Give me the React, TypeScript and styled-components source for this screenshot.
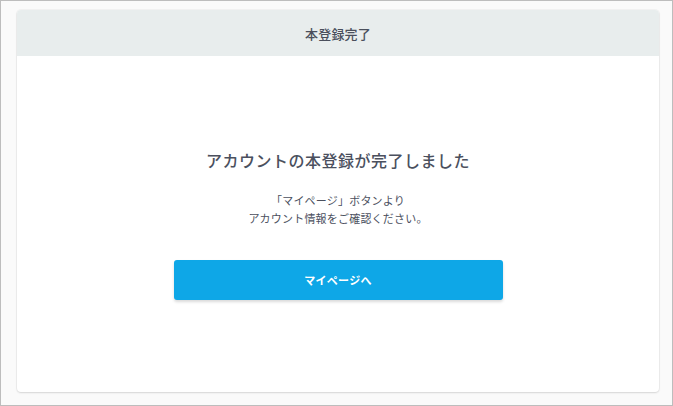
import React from "react";
import styled, { createGlobalStyle } from "styled-components";

const Global = createGlobalStyle`
  html, body { margin: 0; padding: 0; }
  body {
    font-family: "Noto Sans CJK JP", "Noto Sans", sans-serif;
    background: #fafafa;
  }
  * { box-sizing: border-box; }
`;

const Frame = styled.div`
  width: 673px;
  height: 406px;
  border: 1px solid #bdbdbd;
  background: #fafafa;
  padding: 9px 13px 13px 16px;
  display: flex;
`;

const Card = styled.div`
  flex: 1;
  display: flex;
  flex-direction: column;
  background: #ffffff;
  border-radius: 4px;
  box-shadow: 0 1px 2px rgba(0, 0, 0, 0.12), 0 0 0 1px rgba(0, 0, 0, 0.03);
  overflow: hidden;
`;

const Header = styled.div`
  height: 46px;
  flex: none;
  background: #e8eded;
  display: flex;
  align-items: center;
  justify-content: center;
  font-size: 13px;
  font-weight: 500;
  color: #4a4f5c;
  letter-spacing: 0.2px;
`;

const Body = styled.div`
  flex: 1;
  display: flex;
  flex-direction: column;
  align-items: center;
  padding-top: 92px;
`;

const Title = styled.h1`
  margin: 0;
  font-size: 16px;
  font-weight: 500;
  color: #4b505e;
  line-height: 24px;
  letter-spacing: 0.5px;
`;

const Message = styled.p`
  margin: 19px 0 0;
  font-size: 11px;
  line-height: 18px;
  color: #4b505e;
  text-align: center;
  letter-spacing: 0.2px;
`;

const Button = styled.button`
  margin-top: 33px;
  width: 329px;
  height: 40px;
  border: none;
  border-radius: 3px;
  background: #0ea7e7;
  color: #ffffff;
  font-family: inherit;
  font-size: 11px;
  font-weight: 700;
  letter-spacing: 0.3px;
  box-shadow: 0 2px 3px rgba(0, 0, 0, 0.15);
  cursor: pointer;
`;

export default function App() {
  return (
    <>
      <Global />
      <Frame>
        <Card>
          <Header>本登録完了</Header>
          <Body>
            <Title>アカウントの本登録が完了しました</Title>
            <Message>
              「マイページ」ボタンより
              <br />
              アカウント情報をご確認ください。
            </Message>
            <Button>マイページへ</Button>
          </Body>
        </Card>
      </Frame>
    </>
  );
}
